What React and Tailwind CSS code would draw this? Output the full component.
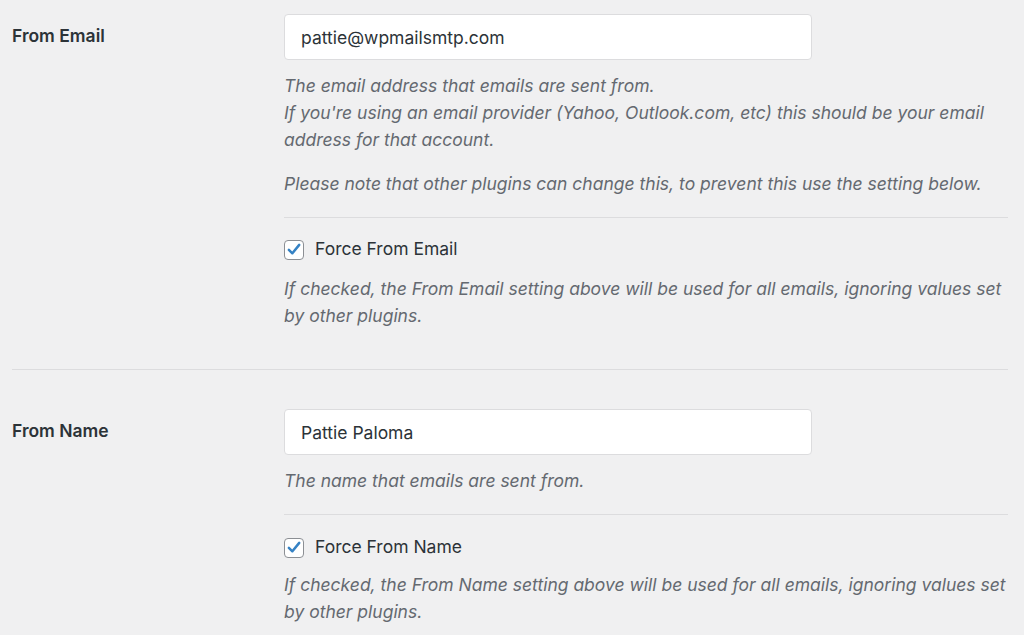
import React from "react";

const FONT = { fontFamily: 'Inter, "Liberation Sans", sans-serif' };

function CheckIcon() {
  return (
    <svg viewBox="0 0 20 20" className="w-[19px] h-[19px]">
      <path
        d="M4.3 10.4 L8.2 14.2 L15.8 4.9"
        fill="none"
        stroke="#3582c4"
        strokeWidth="2.8"
        strokeLinecap="round"
        strokeLinejoin="round"
      />
    </svg>
  );
}

function ForceCheckbox({ label }) {
  return (
    <label className="flex items-center gap-[11px] h-[27px] text-[17.5px] text-[#2c3338]">
      <span className="w-[20px] h-[20px] rounded-[4px] border border-[#8c8f94] bg-white flex items-center justify-center shrink-0">
        <CheckIcon />
      </span>
      {label}
    </label>
  );
}

function Desc({ lines, className = "" }) {
  return (
    <p className={`italic text-[17.5px] leading-[27px] text-[#646970] whitespace-nowrap ${className}`}>
      {lines.map((l, i) => (
        <React.Fragment key={i}>
          {l}
          {i < lines.length - 1 && <br />}
        </React.Fragment>
      ))}
    </p>
  );
}

function SettingRow({ label, children }) {
  return (
    <div className="flex">
      <div className="w-[272px] shrink-0 pt-[13px] text-[17.5px] font-semibold text-[#2c3338] leading-none">
        {label}
      </div>
      <div className="w-[724px]">{children}</div>
    </div>
  );
}

function TextField({ value }) {
  return (
    <input
      readOnly
      value={value}
      className="w-[528px] h-[46px] rounded-[4px] border border-[#dcdcde] bg-white px-[16px] text-[17.5px] text-[#2c3338] outline-none"
    />
  );
}

export default function App() {
  return (
    <div className="min-h-[635px] bg-[#f0f0f1] pl-[12px] pr-[16px] pt-[14px]" style={FONT}>
      <SettingRow label="From Email">
        <TextField value="pattie@wpmailsmtp.com" />
        <Desc
          className="mt-[12px]"
          lines={[
            "The email address that emails are sent from.",
            "If you're using an email provider (Yahoo, Outlook.com, etc) this should be your email",
            "address for that account.",
          ]}
        />
        <Desc
          className="mt-[17px]"
          lines={["Please note that other plugins can change this, to prevent this use the setting below."]}
        />
        <div className="mt-[20px] border-t border-[#dcdcde]" />
        <div className="mt-[18px]">
          <ForceCheckbox label="Force From Email" />
        </div>
        <Desc
          className="mt-[12px]"
          lines={[
            "If checked, the From Email setting above will be used for all emails, ignoring values set",
            "by other plugins.",
          ]}
        />
      </SettingRow>

      <div className="mt-[40px] border-t border-[#dcdcde]" />

      <div className="mt-[39px]">
        <SettingRow label="From Name">
          <TextField value="Pattie Paloma" />
          <Desc className="mt-[12px]" lines={["The name that emails are sent from."]} />
          <div className="mt-[20px] border-t border-[#dcdcde]" />
          <div className="mt-[19px]">
            <ForceCheckbox label="Force From Name" />
          </div>
          <Desc
            className="mt-[10px]"
            lines={[
              "If checked, the From Name setting above will be used for all emails, ignoring values set",
              "by other plugins.",
            ]}
          />
        </SettingRow>
      </div>
    </div>
  );
}
